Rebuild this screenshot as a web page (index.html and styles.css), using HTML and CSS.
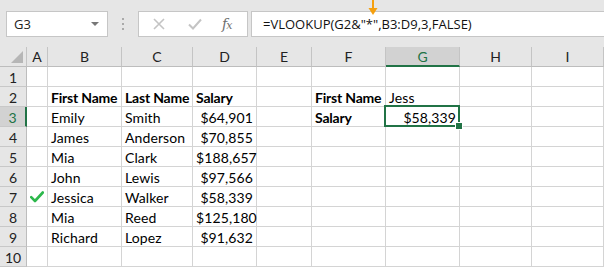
FILE: index.html
```html
<!DOCTYPE html>
<html>
<head>
<meta charset="utf-8">
<link rel="stylesheet" href="styles.css">
</head>
<body>
<div class="toolbar">
  <div class="namebox"><span class="nb-text">G3</span><span class="nb-arrow"></span></div>
  <div class="dots"><i></i><i></i><i></i></div>
  <div class="fbtns">
    <svg class="ico-x" width="12" height="12" viewBox="0 0 12 12"><path d="M1 1 L11 11 M11 1 L1 11" stroke="#c4c4c4" stroke-width="1.6" fill="none"/></svg>
    <svg class="ico-ok" width="14" height="12" viewBox="0 0 14 12"><path d="M1 6.5 L5 10.5 L13 1.5" stroke="#c4c4c4" stroke-width="2" fill="none"/></svg>
    <span class="fx">f<span class="fx-x">x</span></span>
  </div>
  <div class="formula">=VLOOKUP(G2&amp;"*",B3:D9,3,FALSE)<svg class="arrow" width="10" height="16" viewBox="0 0 10 16"><path d="M5 0 V10" stroke="#f5a00f" stroke-width="2"/><path d="M0.5 8 L5 15 L9.5 8 Z" fill="#f5a00f"/></svg></div>
</div>
<div class="sheet">
  <div class="ch corner"><span class="tri"></span></div>
  <div class="ch">A</div><div class="ch">B</div><div class="ch">C</div><div class="ch">D</div><div class="ch">E</div><div class="ch">F</div><div class="ch sel">G</div><div class="ch">H</div><div class="ch">I</div>

  <div class="rh">1</div><div class="c"></div><div class="c"></div><div class="c"></div><div class="c"></div><div class="c"></div><div class="c"></div><div class="c"></div><div class="c"></div><div class="c"></div>

  <div class="rh">2</div><div class="c"></div><div class="c b">First Name</div><div class="c b">Last Name</div><div class="c b">Salary</div><div class="c"></div><div class="c b">First Name</div><div class="c">Jess</div><div class="c"></div><div class="c"></div>

  <div class="rh sel">3</div><div class="c"></div><div class="c">Emily</div><div class="c">Smith</div><div class="c r">$64,901</div><div class="c"></div><div class="c b">Salary</div><div class="c r active">$58,339</div><div class="c"></div><div class="c"></div>

  <div class="rh">4</div><div class="c"></div><div class="c">James</div><div class="c">Anderson</div><div class="c r">$70,855</div><div class="c"></div><div class="c"></div><div class="c"></div><div class="c"></div><div class="c"></div>

  <div class="rh">5</div><div class="c"></div><div class="c">Mia</div><div class="c">Clark</div><div class="c r">$188,657</div><div class="c"></div><div class="c"></div><div class="c"></div><div class="c"></div><div class="c"></div>

  <div class="rh">6</div><div class="c"></div><div class="c">John</div><div class="c">Lewis</div><div class="c r">$97,566</div><div class="c"></div><div class="c"></div><div class="c"></div><div class="c"></div><div class="c"></div>

  <div class="rh">7</div><div class="c chk"><svg width="14" height="12" viewBox="0 0 14 12"><path d="M1.2 6.2 L5 10 L12.8 1.5" stroke="#2db84c" stroke-width="2.6" fill="none" stroke-linecap="round" stroke-linejoin="round"/></svg></div><div class="c">Jessica</div><div class="c">Walker</div><div class="c r">$58,339</div><div class="c"></div><div class="c"></div><div class="c"></div><div class="c"></div><div class="c"></div>

  <div class="rh">8</div><div class="c"></div><div class="c">Mia</div><div class="c">Reed</div><div class="c r">$125,180</div><div class="c"></div><div class="c"></div><div class="c"></div><div class="c"></div><div class="c"></div>

  <div class="rh">9</div><div class="c"></div><div class="c">Richard</div><div class="c">Lopez</div><div class="c r">$91,632</div><div class="c"></div><div class="c"></div><div class="c"></div><div class="c"></div><div class="c"></div>

  <div class="rh">10</div><div class="c"></div><div class="c"></div><div class="c"></div><div class="c"></div><div class="c"></div><div class="c"></div><div class="c"></div><div class="c"></div><div class="c"></div>
</div>
</body>
</html>
```

FILE: styles.css
```css
* { box-sizing: border-box; }
html, body { margin: 0; padding: 0; }
body {
  width: 604px;
  height: 267px;
  overflow: hidden;
  background: #e6e6e6;
  font-family: "Lato", "Open Sans", sans-serif;
  color: #000;
}
.toolbar {
  height: 47px;
  display: flex;
  align-items: flex-start;
  padding-top: 11px;
  padding-left: 6px;
  font-family: "Open Sans", "Noto Sans", sans-serif;
  font-size: 13px;
}
.namebox {
  width: 102px;
  height: 26px;
  background: #fff;
  border: 1px solid #c6c6c6;
  display: flex;
  align-items: center;
  justify-content: space-between;
  padding: 0 8px 0 7px;
  color: #222;
}
.nb-arrow {
  width: 0; height: 0;
  border-left: 4px solid transparent;
  border-right: 4px solid transparent;
  border-top: 4px solid #777;
}
.dots {
  width: 30px;
  height: 26px;
  display: flex;
  flex-direction: column;
  align-items: center;
  justify-content: center;
  gap: 3px;
}
.dots i {
  display: block;
  width: 2px; height: 2px;
  background: #aaa;
}
.fbtns {
  width: 110px;
  height: 26px;
  background: #fff;
  border: 1px solid #c6c6c6;
  display: flex;
  align-items: center;
  padding-left: 14px;
}
.ico-x { margin-right: 23px; }
.ico-ok { margin-right: 20px; }
.fx {
  font-family: "DejaVu Serif", "Liberation Serif", serif;
  font-style: italic;
  font-size: 14px;
  color: #6e6e6e;
  letter-spacing: -1px;
}
.fx-x { font-size: 11px; }
.formula {
  position: relative;
  margin-left: 3px;
  flex: 1;
  height: 26px;
  background: #fff;
  border: 1px solid #c6c6c6;
  border-right: none;
  padding-left: 11px;
  line-height: 24px;
  color: #111;
  white-space: nowrap;
}
.arrow {
  position: absolute;
  left: 116px;
  top: -12px;
}
.sheet {
  display: grid;
  grid-template-columns: 27px 21px 74px 71px 64px 55px 74px 74px 72px 72px;
  grid-auto-rows: 20px;
  background: #fff;
  font-size: 14px;
}
.ch {
  background: #e6e6e6;
  border-right: 1px solid #c4c4c4;
  border-bottom: 1px solid #bdbdbd;
  text-align: center;
  line-height: 20px;
  color: #222;
  font-size: 14px;
}
.ch.corner { position: relative; border-right: 1px solid #c4c4c4; }
.tri {
  position: absolute;
  right: 3px; bottom: 3px;
  width: 0; height: 0;
  border-left: 12px solid transparent;
  border-bottom: 12px solid #b6b6b6;
}
.ch.sel {
  background: #d2d2d2;
  color: #217346;
  border-bottom: 2px solid #217346;
}
.rh {
  background: #e6e6e6;
  border-right: 1px solid #bdbdbd;
  border-bottom: 1px solid #c8c8c8;
  text-align: center;
  line-height: 21px;
  color: #222;
}
.rh.sel {
  background: #d2d2d2;
  color: #217346;
  border-right: 2px solid #217346;
}
.c {
  border-right: 1px solid #d4d4d4;
  border-bottom: 1px solid #d4d4d4;
  padding: 0 3px;
  line-height: 21px;
  white-space: nowrap;
  overflow: visible;
  letter-spacing: 0.1px;
}
.c.b { font-weight: bold; letter-spacing: -0.2px; }
.c.r { text-align: right; padding-right: 3px; }
.c.active { position: relative; }
.c.active::before {
  content: "";
  position: absolute;
  left: -2px; top: -2px; right: -1px; bottom: -1px;
  border: 2px solid #217346;
}
.c.active::after {
  content: "";
  position: absolute;
  right: -4px; bottom: -4px;
  width: 6px; height: 6px;
  background: #217346;
  border: 1px solid #fff;
}
.c.chk { display: flex; align-items: center; justify-content: center; padding: 0; }
```
